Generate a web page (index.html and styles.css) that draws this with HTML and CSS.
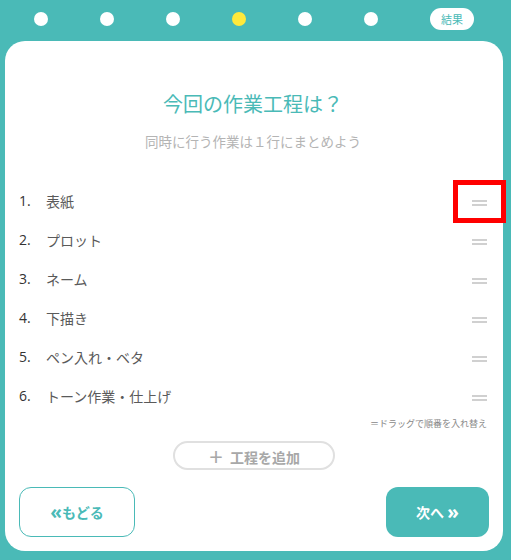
FILE: index.html
```html
<!DOCTYPE html>
<html lang="ja">
  <head>
    <meta charset="UTF-8" />
    <meta name="viewport" content="width=device-width, initial-scale=1.0" />
    <title>作業工程</title>
    <link rel="stylesheet" href="styles.css">
  </head>
  <body>
    <nav class="steps">
      <span class="dot"></span>
      <span class="dot"></span>
      <span class="dot"></span>
      <span class="dot current"></span>
      <span class="dot"></span>
      <span class="dot"></span>
      <span class="result">結果</span>
    </nav>

    <main class="card">
      <h1 class="title">今回の作業工程は？</h1>
      <p class="lead">同時に行う作業は１行にまとめよう</p>

      <ol class="process">
        <li class="row"><span class="num">1.</span><span class="name">表紙</span><span class="handle"></span></li>
        <li class="row"><span class="num">2.</span><span class="name">プロット</span><span class="handle"></span></li>
        <li class="row"><span class="num">3.</span><span class="name">ネーム</span><span class="handle"></span></li>
        <li class="row"><span class="num">4.</span><span class="name">下描き</span><span class="handle"></span></li>
        <li class="row"><span class="num">5.</span><span class="name">ペン入れ・ベタ</span><span class="handle"></span></li>
        <li class="row"><span class="num">6.</span><span class="name">トーン作業・仕上げ</span><span class="handle"></span></li>
      </ol>
      <p class="hint">＝ドラッグで順番を入れ替え</p>

      <div class="add-wrap">
        <button class="add"><span class="plus">＋</span>工程を追加</button>
      </div>

      <div class="nav-buttons">
        <button class="back"><span class="arrow">«</span>もどる</button>
        <button class="next">次へ <span class="arrow">»</span></button>
      </div>
    </main>

    <div class="highlight"></div>
  </body>
</html>
```

FILE: styles.css
```css
body {
  margin: 0;
  background-color: #4abab7;
  font-family: "Open Sans", "Noto Sans CJK JP", sans-serif;
  color: #444;
  position: relative;
  width: 511px;
  height: 560px;
  overflow: hidden;
}
.steps {
  display: flex;
  align-items: center;
  gap: 52px;
  padding: 8px 0 0 34px;
  height: 22px;
  margin-bottom: 11px;
}
.dot {
  width: 14px;
  height: 14px;
  border-radius: 50%;
  background-color: #fff;
}
.dot.current {
  background-color: #ffe93b;
}
.result {
  width: 44px;
  height: 22px;
  border-radius: 11px;
  background-color: #fff;
  color: #4abab7;
  font-family: "Noto Sans CJK JP", sans-serif;
  font-size: 11px;
  line-height: 22px;
  text-align: center;
}
.card {
  box-sizing: border-box;
  width: 498px;
  height: 510px;
  margin-left: 5px;
  background-color: #fff;
  border-radius: 20px;
  padding: 48px 16px 0 14px;
}
.title {
  margin: 0;
  font-family: "Noto Sans CJK JP", sans-serif;
  font-weight: normal;
  font-size: 20px;
  line-height: 30px;
  color: #4abab7;
  text-align: center;
}
.lead {
  margin: 12px 0 0 0;
  font-family: "Noto Sans CJK JP", sans-serif;
  font-size: 13.5px;
  line-height: 20px;
  color: #b4b4b4;
  text-align: center;
}
.process {
  list-style: none;
  margin: 30px 0 0 0;
  padding: 0;
}
.row {
  display: flex;
  align-items: center;
  height: 39px;
  font-size: 14px;
}
.num {
  width: 27px;
  color: #333;
}
.name {
  flex: 1;
  color: #5a5a5a;
  font-family: "Noto Sans CJK JP", sans-serif;
}
.handle {
  width: 15px;
  height: 6px;
  margin-top: 4px;
  border-top: 2px solid #d0d0d0;
  border-bottom: 2px solid #d0d0d0;
  box-sizing: border-box;
}
.hint {
  margin: 3px 0 0 0;
  font-family: "Noto Sans CJK JP", sans-serif;
  font-size: 9px;
  line-height: 12px;
  color: #888;
  text-align: right;
}
.add-wrap {
  display: flex;
  justify-content: center;
  margin-top: 11px;
  padding-left: 2px;
}
.add {
  width: 162px;
  height: 29px;
  border: 2px solid #e0e0e0;
  border-radius: 15px;
  background-color: #fff;
  color: #a8a8a8;
  font-family: "Noto Sans CJK JP", sans-serif;
  font-weight: bold;
  font-size: 14px;
  padding: 0;
}
.plus {
  margin-right: 6px;
  font-size: 16px;
}
.nav-buttons {
  display: flex;
  justify-content: space-between;
  margin-top: 17px;
}
.back,
.next {
  height: 50px;
  border-radius: 12px;
  font-family: "Noto Sans CJK JP", sans-serif;
  font-weight: bold;
  font-size: 14px;
  cursor: pointer;
}
.arrow {
  font-family: "Open Sans", sans-serif;
  font-size: 19px;
  line-height: 1;
  vertical-align: -1px;
}
.back {
  width: 116px;
  background-color: #fff;
  border: 1px solid #4abab7;
  color: #4abab7;
}
.next {
  width: 103px;
  margin-right: -2px;
  background-color: #4abab7;
  border: none;
  color: #fff;
}
.highlight {
  position: absolute;
  left: 453px;
  top: 180px;
  width: 53px;
  height: 43px;
  box-sizing: border-box;
  border: 5px solid #ff0000;
}
```
